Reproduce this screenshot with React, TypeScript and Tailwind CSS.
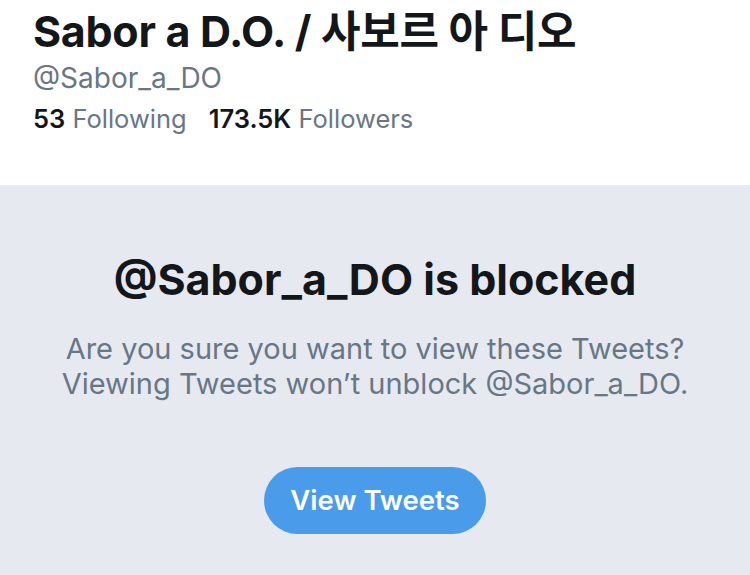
import React from "react";

const font = { fontFamily: "Inter, 'Noto Sans CJK KR', sans-serif" };

export default function App() {
  return (
    <div
      className="w-[750px] h-[575px] flex flex-col bg-[#e6e9ef] overflow-hidden"
      style={font}
    >
      <div className="h-[185px] bg-white px-[33px] pt-[5px] flex flex-col">
        <h1 className="text-[43px] leading-[52px] font-bold text-[#14171a] tracking-[-0.3px]">
          Sabor a D.O. / 사보르 아 디오
        </h1>
        <div className="text-[28px] leading-[36px] text-[#687785] mt-[3px]">
          @Sabor_a_DO
        </div>
        <div className="flex gap-[22px] text-[25.5px] leading-[34px] mt-[6px]">
          <span>
            <span className="font-semibold text-[#14171a]">53</span>{" "}
            <span className="text-[#687785]">Following</span>
          </span>
          <span>
            <span className="font-semibold text-[#14171a]">173.5K</span>{" "}
            <span className="text-[#687785]">Followers</span>
          </span>
        </div>
      </div>
      <div className="flex flex-col items-center pt-[68px]">
        <h2 className="text-[43px] leading-[52px] font-bold text-[#14171a]">
          @Sabor_a_DO is blocked
        </h2>
        <p className="mt-[26px] text-[29px] leading-[35px] text-[#687785] text-center">
          Are you sure you want to view these Tweets?
          <br />
          Viewing Tweets won’t unblock @Sabor_a_DO.
        </p>
        <button className="mt-[66px] w-[222px] h-[67px] rounded-full bg-[#4a9be9] text-white text-[27.5px] font-semibold">
          View Tweets
        </button>
      </div>
    </div>
  );
}
